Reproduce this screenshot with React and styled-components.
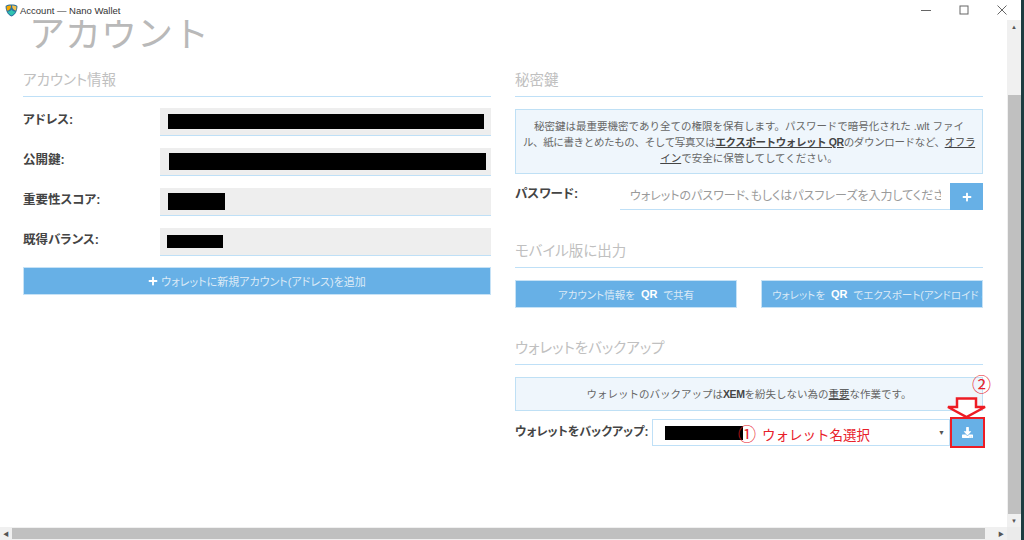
import React from 'react'
import styled, { createGlobalStyle } from 'styled-components'
import { FaPlus, FaDownload } from 'react-icons/fa'

const GlobalStyle = createGlobalStyle`
  html, body {
    margin: 0;
    height: 100%;
    overflow: hidden;
    background: #fff;
  }
  body {
    font-family: "Liberation Sans", "Noto Sans CJK JP", sans-serif;
    color: #444;
  }
`

const Windowed = styled.div`
  width: 1024px;
  height: 540px;
  display: flex;
  flex-direction: column;
  background: #fff;
  overflow: hidden;
  border-right: 3px solid #1d3c40;
  box-sizing: border-box;
`

const TitleBar = styled.header`
  height: 20px;
  flex: none;
  display: flex;
  align-items: center;
  padding-left: 5px;
  gap: 2px;
  background: #fff;
  position: relative;
  z-index: 1;
`

const TitleText = styled.span`
  font-size: 9.5px;
  color: #333;
`

const WindowButtons = styled.div`
  margin-left: auto;
  display: flex;
  align-items: center;
  height: 100%;
  color: #666;
`

const WindowButton = styled.div`
  width: 38px;
  display: flex;
  justify-content: center;
  align-items: center;
`

const Middle = styled.div`
  flex: 1;
  min-height: 0;
  display: flex;
`

const Viewport = styled.main`
  flex: 1;
  min-width: 0;
  overflow: hidden;
`

const Page = styled.div`
  width: 984px;
  padding-left: 23px;
  box-sizing: border-box;
  margin-top: -15px;
`

const PageTitle = styled.h1`
  margin: 0 0 0 6px;
  height: 58px;
  font-size: 36px;
  line-height: 53px;
  font-weight: 400;
  color: #b9b9b9;
  font-family: "Noto Sans CJK JP", sans-serif;
`

const Columns = styled.div`
  display: grid;
  grid-template-columns: 468px 468px;
  column-gap: 24px;
  padding-top: 6px;
`

const Section = styled.section`
  margin-bottom: ${p => p.$gap || 0}px;
`

const Heading = styled.h2`
  margin: 0;
  height: 27px;
  line-height: 20px;
  font-size: 14.5px;
  font-weight: 400;
  color: #c0c0c0;
  border-bottom: 1px solid #bfe0f7;
  font-family: "Noto Sans CJK JP", sans-serif;
  font-feature-settings: "palt";
`

const Fields = styled.div`
  display: flex;
  flex-direction: column;
  gap: 12px;
  margin-top: 11px;
`

const FieldRow = styled.div`
  display: grid;
  grid-template-columns: 137px 331px;
`

const FieldLabel = styled.label`
  font-size: 12.5px;
  font-weight: 700;
  color: #444;
  line-height: 25px;
  font-feature-settings: "palt";
`

const FieldValue = styled.div`
  height: ${p => p.$h || 28}px;
  box-sizing: border-box;
  background: #eee;
  border-bottom: 1px solid #bfe0f7;
  display: flex;
  align-items: center;
  padding-left: ${p => p.$pad || 8}px;
`

const Redaction = styled.span`
  display: block;
  flex: none;
  background: #000;
  width: ${p => p.$w}px;
  height: ${p => p.$h}px;
`

const BlueButton = styled.button`
  border: 1px solid #c6e2f6;
  margin: 0;
  padding: 0;
  background: #67b0e6;
  color: #dbeaf6;
  font-family: inherit;
  font-size: 10.5px;
  font-feature-settings: "palt";
  height: 28px;
  white-space: nowrap;
  overflow: hidden;
  display: flex;
  align-items: center;
  justify-content: ${p => (p.$clip ? 'flex-start' : 'center')};
  padding-left: ${p => (p.$clip ? '10px' : '0')};
  gap: 3px;

  b { color: #fff; font-size: 11px; margin: 0 3px; }
`

const AddButton = styled(BlueButton)`
  width: 100%;
  margin-top: 11px;
  font-size: 11px;
  svg { color: #fff; width: 10px; height: 10px; }
`

const Notice = styled.div`
  margin-top: 12px;
  box-sizing: border-box;
  height: ${p => p.$h}px;
  padding: 8px 4px 0;
  background: #eff6fc;
  border: 1px solid #bfe0f5;
  color: #666;
  font-size: 10.5px;
  line-height: 16px;
  text-align: center;
  white-space: nowrap;

  u, b { color: #444; }
  b { letter-spacing: -0.4px; }
`

const TightLine = styled.span`
  letter-spacing: -0.35px;
`

const InputRow = styled.div`
  display: flex;
  align-items: flex-start;
  margin-top: ${p => p.$top || 9}px;
  position: relative;
`

const InputLabel = styled.label`
  width: ${p => p.$w}px;
  flex: none;
  font-size: ${p => p.$size || 12.5}px;
  font-weight: 700;
  color: #444;
  line-height: ${p => p.$lh || 22}px;
  white-space: nowrap;
  font-feature-settings: "palt";
`

const PasswordInput = styled.div`
  flex: 1;
  min-width: 0;
  height: 27px;
  box-sizing: border-box;
  border-bottom: 1px solid #bfe0f7;
  padding: 0 9px 0 10px;
`

const Placeholder = styled.div`
  color: #9a9a9a;
  font-size: 12px;
  font-feature-settings: "palt";
  line-height: 27px;
  white-space: nowrap;
  overflow: hidden;
`

const SquareButton = styled(BlueButton)`
  width: ${p => p.$w || 33}px;
  height: 27px;
  flex: none;
  border: none;
  svg { color: #fff; width: 10px; height: 10px; }
`

const ButtonPair = styled.div`
  display: grid;
  grid-template-columns: 222px 222px;
  column-gap: 24px;
  margin-top: 12px;
`

const BackupSelect = styled.div`
  width: 298px;
  flex: none;
  height: 27px;
  box-sizing: border-box;
  background: #fff;
  border: 1px solid #bfe0f7;
  display: flex;
  align-items: center;
  padding-left: 12px;
  color: #555;

  &::after {
    content: "▼";
    font-size: 7px;
    margin-left: auto;
    margin-right: 4px;
  }
`

const RedBox = styled.div`
  flex: none;
  border: 2.5px solid #ed1c24;
  margin: -2px -2px 0 0;
  display: flex;
  svg { color: #fff; width: 11px; height: 11px; }
`

const Annotation = styled.span`
  position: absolute;
  color: #e8202a;
  font-family: "Noto Sans CJK JP", sans-serif;
  white-space: nowrap;
  left: ${p => p.$x}px;
  top: ${p => p.$y}px;
  font-size: ${p => p.$size}px;
  line-height: 1;
`

const ArrowMark = styled.svg`
  position: absolute;
  left: 431px;
  top: -22px;
`

const VScroll = styled.aside`
  width: 14px;
  flex: none;
  background: #f0f0f0;
  display: flex;
  flex-direction: column;
`

const ScrollArrow = styled.div`
  height: ${p => (p.$across ? '100%' : '13px')};
  width: ${p => (p.$across ? '12px' : '100%')};
  flex: none;
  display: flex;
  align-items: center;
  justify-content: center;
  color: #555;
  font-size: 6px;
  line-height: 1;
`

const VTrack = styled.div`
  flex: 1;
  display: flex;
  flex-direction: column;
  padding-top: 62px;
`

const VThumb = styled.div`
  flex: 1;
  background: #c0c0c0;
  margin: 0 0 0 1px;
`

const HScroll = styled.div`
  height: 13px;
  flex: none;
  display: flex;
  background: #f0f0f0;
`

const HThumb = styled.div`
  width: 973px;
  background: #c0c0c0;
  margin: 1px 0;
`

const HSpacer = styled.div`
  flex: 1;
`

const Corner = styled.div`
  width: 14px;
  background: #ebebeb;
  flex: none;
`

const NemLogo = () => (
  <svg width="13" height="13" viewBox="0 0 13 13">
    <path d="M6.5 0.6C4 0.6 2 1 0.6 2 0.5 6 2 10.5 6.5 12.6 11 10.5 12.5 6 12.4 2 11 1 9 0.6 6.5 0.6Z" fill="#2b6f9e" />
    <path d="M1.6 2.6C3 1.8 4.4 1.6 6 1.6 6 3.2 5.6 5 4 6 3 6.6 2.4 6.6 1.9 6.4 1.7 5.2 1.6 3.8 1.6 2.6Z" fill="#f7a800" />
    <path d="M7 1.6C8.6 1.6 10 1.8 11.4 2.6 11.4 3.8 11.3 5.2 11.1 6.4 9 6.6 7 4.6 7 1.6Z" fill="#f2c14e" />
    <path d="M2.5 7.6C4.5 7.6 6 6.6 6.5 5.4 7 6.6 8.6 7.6 10.5 7.6 9.8 9.2 8.4 10.6 6.5 11.5 4.6 10.6 3.2 9.2 2.5 7.6Z" fill="#2fc4b2" />
  </svg>
)

export default function App() {
  return (
    <Windowed>
      <GlobalStyle />
      <TitleBar>
        <NemLogo />
        <TitleText>Account — Nano Wallet</TitleText>
        <WindowButtons>
          <WindowButton>
            <svg width="10" height="10" viewBox="0 0 10 10"><path d="M0 5.5h10" stroke="currentColor" /></svg>
          </WindowButton>
          <WindowButton>
            <svg width="10" height="10" viewBox="0 0 10 10"><rect x="1" y="1" width="8" height="8" fill="none" stroke="currentColor" /></svg>
          </WindowButton>
          <WindowButton>
            <svg width="10" height="10" viewBox="0 0 10 10"><path d="M0.5 0.5l9 9M9.5 0.5l-9 9" stroke="currentColor" /></svg>
          </WindowButton>
        </WindowButtons>
      </TitleBar>
      <Middle>
        <Viewport>
          <Page>
            <PageTitle>アカウント</PageTitle>
            <Columns>
              <Section>
                <Heading>アカウント情報</Heading>
                <Fields>
                  <FieldRow>
                    <FieldLabel>アドレス:</FieldLabel>
                    <FieldValue><Redaction $w={316} $h={15} /></FieldValue>
                  </FieldRow>
                  <FieldRow>
                    <FieldLabel>公開鍵:</FieldLabel>
                    <FieldValue $pad={9}><Redaction $w={317} $h={17} /></FieldValue>
                  </FieldRow>
                  <FieldRow>
                    <FieldLabel>重要性スコア:</FieldLabel>
                    <FieldValue><Redaction $w={57} $h={17} /></FieldValue>
                  </FieldRow>
                  <FieldRow>
                    <FieldLabel>既得バランス:</FieldLabel>
                    <FieldValue $pad={7}><Redaction $w={56} $h={13} /></FieldValue>
                  </FieldRow>
                </Fields>
                <AddButton type="button">
                  <FaPlus />ウォレットに新規アカウント(アドレス)を追加
                </AddButton>
              </Section>
              <div>
                <Section $gap={30}>
                  <Heading>秘密鍵</Heading>
                  <Notice $h={65}>
                    秘密鍵は最重要機密であり全ての権限を保有します。パスワードで暗号化された .wlt ファイ<br />
                    <TightLine>ル、紙に書きとめたもの、そして写真又は<u><b>エクスポートウォレット QR</b></u>のダウンロードなど、<u>オフラ</u></TightLine><br />
                    <u>イン</u>で安全に保管してしてください。
                  </Notice>
                  <InputRow>
                    <InputLabel $w={105}>パスワード:</InputLabel>
                    <PasswordInput>
                      <Placeholder>ウォレットのパスワード、もしくはパスフレーズを入力してください</Placeholder>
                    </PasswordInput>
                    <SquareButton type="button"><FaPlus /></SquareButton>
                  </InputRow>
                </Section>
                <Section $gap={29}>
                  <Heading>モバイル版に出力</Heading>
                  <ButtonPair>
                    <BlueButton type="button">アカウント情報を<b>QR</b>で共有</BlueButton>
                    <BlueButton type="button" $clip>ウォレットを<b>QR</b>でエクスポート(アンドロイド &amp; iOS)</BlueButton>
                  </ButtonPair>
                </Section>
                <Section>
                  <Heading>ウォレットをバックアップ</Heading>
                  <Notice $h={34}>
                    ウォレットのバックアップは<b>XEM</b>を紛失しない為の<u>重要</u>な作業です。
                  </Notice>
                  <InputRow $top={8}>
                    <InputLabel $w={137} $size={12} $lh={26}>ウォレットをバックアップ:</InputLabel>
                    <BackupSelect><Redaction $w={78} $h={14} /></BackupSelect>
                    <RedBox>
                      <SquareButton type="button" $w={31}><FaDownload /></SquareButton>
                    </RedBox>
                    <Annotation $x={223} $y={5} $size={18}>①</Annotation>
                    <Annotation $x={247} $y={9} $size={13.5}>ウォレット名選択</Annotation>
                    <Annotation $x={457} $y={-45} $size={19}>②</Annotation>
                    <ArrowMark width="42" height="22" viewBox="0 0 42 22">
                      <path d="M11 1.5H30V10H39L20.5 20 2 10H11Z" fill="#fff" stroke="#ed1c24" strokeWidth="2.5" />
                    </ArrowMark>
                  </InputRow>
                </Section>
              </div>
            </Columns>
          </Page>
        </Viewport>
        <VScroll>
          <ScrollArrow>▲</ScrollArrow>
          <VTrack><VThumb /></VTrack>
          <ScrollArrow>▼</ScrollArrow>
        </VScroll>
      </Middle>
      <HScroll>
        <ScrollArrow $across>◀</ScrollArrow>
        <HThumb />
        <HSpacer />
        <ScrollArrow $across>▶</ScrollArrow>
        <Corner />
      </HScroll>
    </Windowed>
  )
}
